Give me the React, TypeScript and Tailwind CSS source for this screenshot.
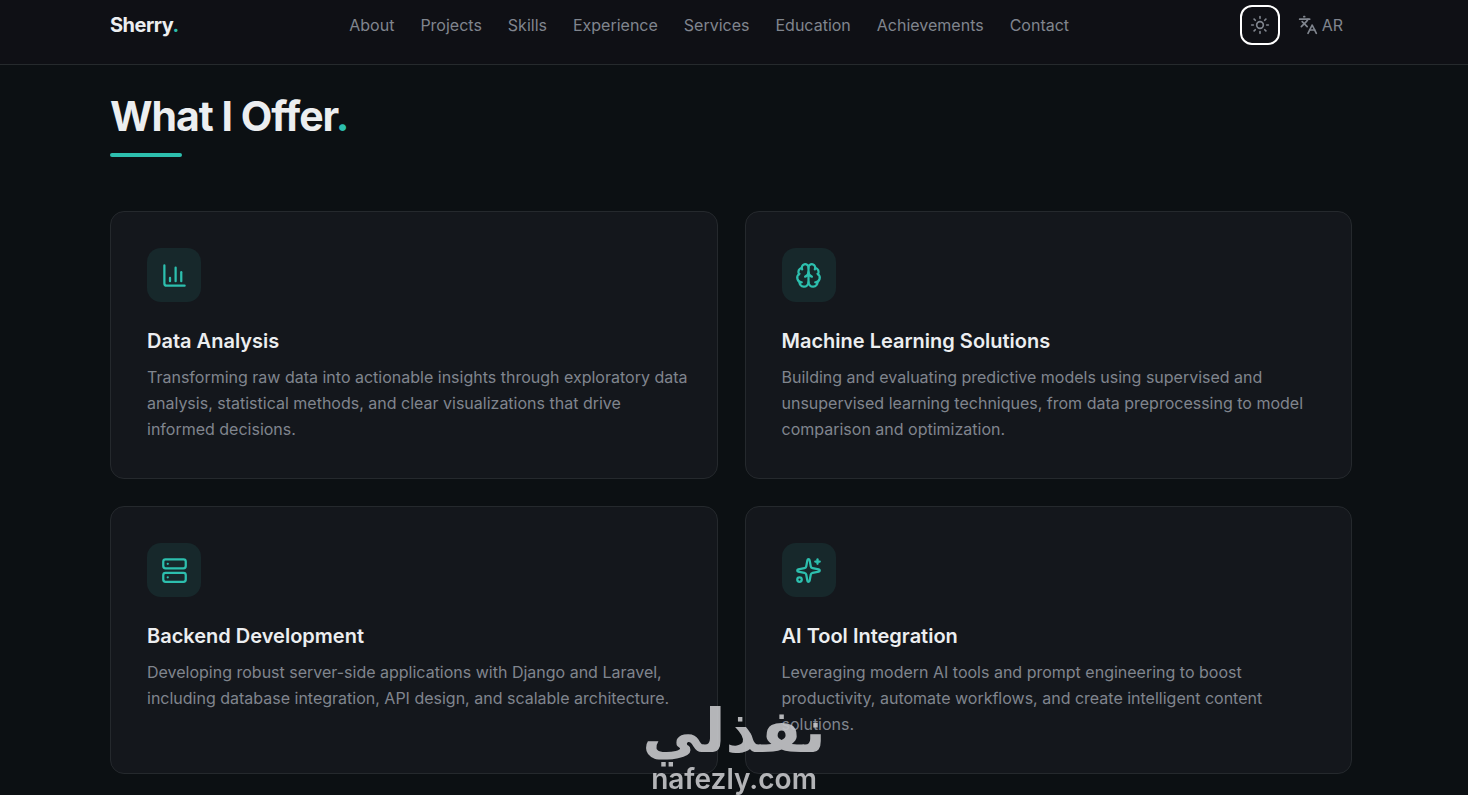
import { Brain, ChartColumn, Languages, Server, Sparkles, Sun, type LucideIcon } from "lucide-react";

type Service = {
  id: string;
  icon: LucideIcon;
  title: string;
  text: string;
};

const NAV = [
  "About",
  "Projects",
  "Skills",
  "Experience",
  "Services",
  "Education",
  "Achievements",
  "Contact",
];

const SERVICES: Service[] = [
  {
    id: "data",
    icon: ChartColumn,
    title: "Data Analysis",
    text: "Transforming raw data into actionable insights through exploratory data analysis, statistical methods, and clear visualizations that drive informed decisions.",
  },
  {
    id: "ml",
    icon: Brain,
    title: "Machine Learning Solutions",
    text: "Building and evaluating predictive models using supervised and unsupervised learning techniques, from data preprocessing to model comparison and optimization.",
  },
  {
    id: "backend",
    icon: Server,
    title: "Backend Development",
    text: "Developing robust server-side applications with Django and Laravel, including database integration, API design, and scalable architecture.",
  },
  {
    id: "ai",
    icon: Sparkles,
    title: "AI Tool Integration",
    text: "Leveraging modern AI tools and prompt engineering to boost productivity, automate workflows, and create intelligent content solutions.",
  },
];

function Header() {
  return (
    <header className="border-b border-[#262a2d] bg-[#0f1015] pr-1.5">
      <div className="mx-auto flex max-w-[1296px] items-center justify-between px-[27px] pt-[5px] pb-[19px]">
        <a href="#home" className="text-xl font-bold tracking-tight text-[#eceef0]">
          Sherry<span className="text-[#2dbfae]">.</span>
        </a>
        <nav aria-label="Main" className="hidden items-center gap-[26px] lg:flex">
          {NAV.map((label) => (
            <a key={label} href={`#${label.toLowerCase()}`} className="text-base hover:text-white">
              {label}
            </a>
          ))}
        </nav>
        <div className="flex items-center gap-[9px]">
          <button
            type="button"
            aria-label="Toggle theme"
            className="flex size-10 items-center justify-center rounded-xl border-2 border-white"
          >
            <Sun size={20} strokeWidth={2} />
          </button>
          <button type="button" className="flex items-center gap-1 px-[9px] text-base">
            <Languages size={20} strokeWidth={2} />
            AR
          </button>
        </div>
      </div>
    </header>
  );
}

function ServiceCard({ service }: { service: Service }) {
  const Icon = service.icon;
  return (
    <article className="rounded-[14px] border border-[#25292d] bg-[#14171c] py-9 pr-6 pl-9">
      <div className="flex size-[54px] items-center justify-center rounded-[14px] bg-[#17282b] text-[#2dbfae]">
        <Icon size={27} strokeWidth={2} />
      </div>
      <h3 className="mt-[25px] text-xl leading-7 font-semibold text-[#eceef0]">{service.title}</h3>
      <p className="mt-[9px] text-base leading-[26px]">{service.text}</p>
    </article>
  );
}

function Watermark() {
  return (
    <div className="pointer-events-none fixed inset-x-0 bottom-0 flex flex-col items-center text-[#c6c7ca] opacity-90">
      <span
        dir="rtl"
        lang="ar"
        className="font-['DejaVu_Sans',sans-serif] text-[60px] leading-[64px] font-bold"
      >
        نفذلي
      </span>
      <span className="text-[28px] leading-8 font-semibold">nafezly.com</span>
    </div>
  );
}

export default function App() {
  return (
    <div className="min-h-screen bg-[#0c1013] font-['Inter',sans-serif] text-[#80858e]">
      <Header />
      <main className="pr-1.5">
        <section id="services" className="mx-auto max-w-[1296px] px-[27px] pt-[29px] pb-5">
          <h2 className="text-[41px] leading-[45px] font-bold tracking-tight text-[#eceef0]">
            What I Offer<span className="text-[#2dbfae]">.</span>
          </h2>
          <div className="mt-[14px] h-1 w-[72px] rounded-full bg-[#2dbfae]" />
          <div className="mt-[54px] grid gap-[27px] md:grid-cols-2">
            {SERVICES.map((s) => (
              <ServiceCard key={s.id} service={s} />
            ))}
          </div>
        </section>
      </main>
      <Watermark />
    </div>
  );
}
